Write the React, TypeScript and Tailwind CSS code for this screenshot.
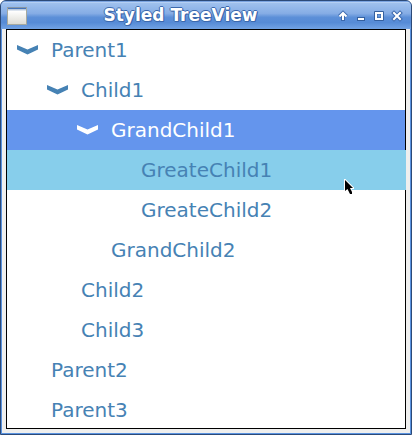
import { useState } from "react";

type Item = { label: string; children?: Item[] };

const items: Item[] = [
  {
    label: "Parent1",
    children: [
      {
        label: "Child1",
        children: [
          {
            label: "GrandChild1",
            children: [{ label: "GreateChild1" }, { label: "GreateChild2" }],
          },
          { label: "GrandChild2" },
        ],
      },
      { label: "Child2" },
      { label: "Child3" },
    ],
  },
  { label: "Parent2" },
  { label: "Parent3" },
];

const indents = ["pl-1", "pl-[34px]", "pl-16", "pl-[94px]"];

function Chevron() {
  return (
    <svg width="21" height="10" viewBox="0 0 21 10" fill="currentColor" aria-hidden="true">
      <path d="M0 0 L10.5 4.5 L21 0 V4.5 L10.5 9.5 L0 4.5 Z" />
    </svg>
  );
}

type NodeProps = {
  item: Item;
  depth: number;
  selected: string;
  hovered: string;
  onSelect: (label: string) => void;
  onHover: (label: string) => void;
};

function TreeNode({ item, depth, selected, hovered, onSelect, onHover }: NodeProps) {
  const [open, setOpen] = useState(true);
  const isSelected = selected === item.label;
  const isHovered = hovered === item.label;
  const tone = isSelected
    ? "bg-[#6495ed] text-white"
    : isHovered
      ? "-mr-px bg-[#87ceeb] text-[#4682b4]"
      : "text-[#4682b4]";

  return (
    <li role="treeitem" aria-selected={isSelected} aria-expanded={item.children ? open : undefined}>
      <div
        className={`relative flex h-10 items-center ${indents[depth]} ${tone}`}
        onMouseEnter={() => onHover(item.label)}
      >
        {item.children ? (
          <button
            type="button"
            aria-label={`Toggle ${item.label}`}
            className="flex h-10 w-10 shrink-0 items-center pl-1.5"
            onClick={() => setOpen(!open)}
          >
            <Chevron />
          </button>
        ) : (
          <span className="w-10 shrink-0" />
        )}
        <button type="button" className="h-10 flex-1 text-left" onClick={() => onSelect(item.label)}>
          {item.label}
        </button>
        {isHovered && <Pointer />}
      </div>
      {item.children && open && (
        <ul role="group">
          {item.children.map((child) => (
            <TreeNode
              key={child.label}
              item={child}
              depth={depth + 1}
              selected={selected}
              hovered={hovered}
              onSelect={onSelect}
              onHover={onHover}
            />
          ))}
        </ul>
      )}
    </li>
  );
}

function Pointer() {
  return (
    <svg
      className="pointer-events-none absolute right-[52px] top-[29px] z-10"
      width="10"
      height="16"
      viewBox="0 0 10 16"
      aria-hidden="true"
    >
      <path
        d="M1 1 V12 L3.5 10 L6 15 H8 V13 L6 9 H9 Z"
        fill="#000"
        stroke="#fff"
        strokeWidth="2"
        paintOrder="stroke"
      />
    </svg>
  );
}

function TitleBar() {
  return (
    <header className="flex h-[26px] items-center bg-[linear-gradient(#9fc1ee_0%,#86ade5_40%,#5c8fd8_55%,#568bd6_75%,#72a3e4_100%)] pl-1.5 pr-[5px]">
      <button
        type="button"
        aria-label="Window menu"
        className="h-[18px] w-5 shrink-0 border border-[#a6aaa0] border-t-[#8797a8] bg-[linear-gradient(#4674b9_0px,#4674b9_1px,#b9c9de_1px,#b9c9de_2px,#ffffff_3px,#dddcd4_100%)]"
      />
      <h1 className="flex-1 whitespace-nowrap text-center text-[17px] font-bold text-white [text-shadow:1px_0_#3c69ad,-1px_0_#3c69ad,0_1px_#3c69ad,0_-1px_#3c69ad,1px_1px_#3c69ad]">
        Styled TreeView
      </h1>
      <div className="flex">
        <button type="button" aria-label="Shade" className="flex w-[18px] justify-center">
          <svg width="12" height="12" viewBox="0 0 12 12" fill="none" aria-hidden="true">
            <path d="M6 11 V3 M2.5 6.5 L6 3 L9.5 6.5" stroke="#3c69ad" strokeWidth="4" />
            <path d="M6 10 V3 M2.5 6.5 L6 3 L9.5 6.5" stroke="#fff" strokeWidth="2" />
          </svg>
        </button>
        <button type="button" aria-label="Minimize" className="flex w-[18px] justify-center">
          <svg width="12" height="12" viewBox="0 0 12 12" aria-hidden="true">
            <path d="M2 7 H10 V11 H2 Z" fill="#35609f" />
            <path d="M3 8 H9 V10 H3 Z" fill="#fff" />
          </svg>
        </button>
        <button type="button" aria-label="Maximize" className="flex w-[18px] justify-center">
          <svg width="12" height="12" viewBox="0 0 12 12" fill="none" aria-hidden="true">
            <path d="M1.5 1.5 H10.5 V10.5 H1.5 Z M4 4 H8 V8 H4 Z" stroke="#35609f" />
            <path d="M3 3 H9 V9 H3 Z" stroke="#fff" strokeWidth="2" />
          </svg>
        </button>
        <button type="button" aria-label="Close" className="flex w-[18px] justify-center">
          <svg width="12" height="12" viewBox="0 0 12 12" aria-hidden="true">
            <path d="M3 3 L9 9 M9 3 L3 9" stroke="#3c69ad" strokeWidth="4" strokeLinecap="square" />
            <path d="M3 3 L9 9 M9 3 L3 9" stroke="#fff" strokeWidth="2" strokeLinecap="square" />
          </svg>
        </button>
      </div>
    </header>
  );
}

export default function App() {
  const [selected, setSelected] = useState("GrandChild1");
  const [hovered, setHovered] = useState("GreateChild1");

  return (
    <div className="bg-white font-['DejaVu_Sans',sans-serif]">
      <main className="overflow-hidden rounded-t-md border border-[#2c4a78] bg-[#5a93e0]">
        <div className="h-px bg-[#7ba5e2]" />
        <div className="h-px bg-[#b4cff3]" />
        <TitleBar />
        <div className="mx-px mb-px bg-[#efefee] px-1 pb-1">
          <div className="border border-black bg-white">
            <ul role="tree" aria-label="Styled TreeView" className="-mb-0.5 text-xl">
              {items.map((item) => (
                <TreeNode
                  key={item.label}
                  item={item}
                  depth={0}
                  selected={selected}
                  hovered={hovered}
                  onSelect={setSelected}
                  onHover={setHovered}
                />
              ))}
            </ul>
          </div>
        </div>
      </main>
    </div>
  );
}
